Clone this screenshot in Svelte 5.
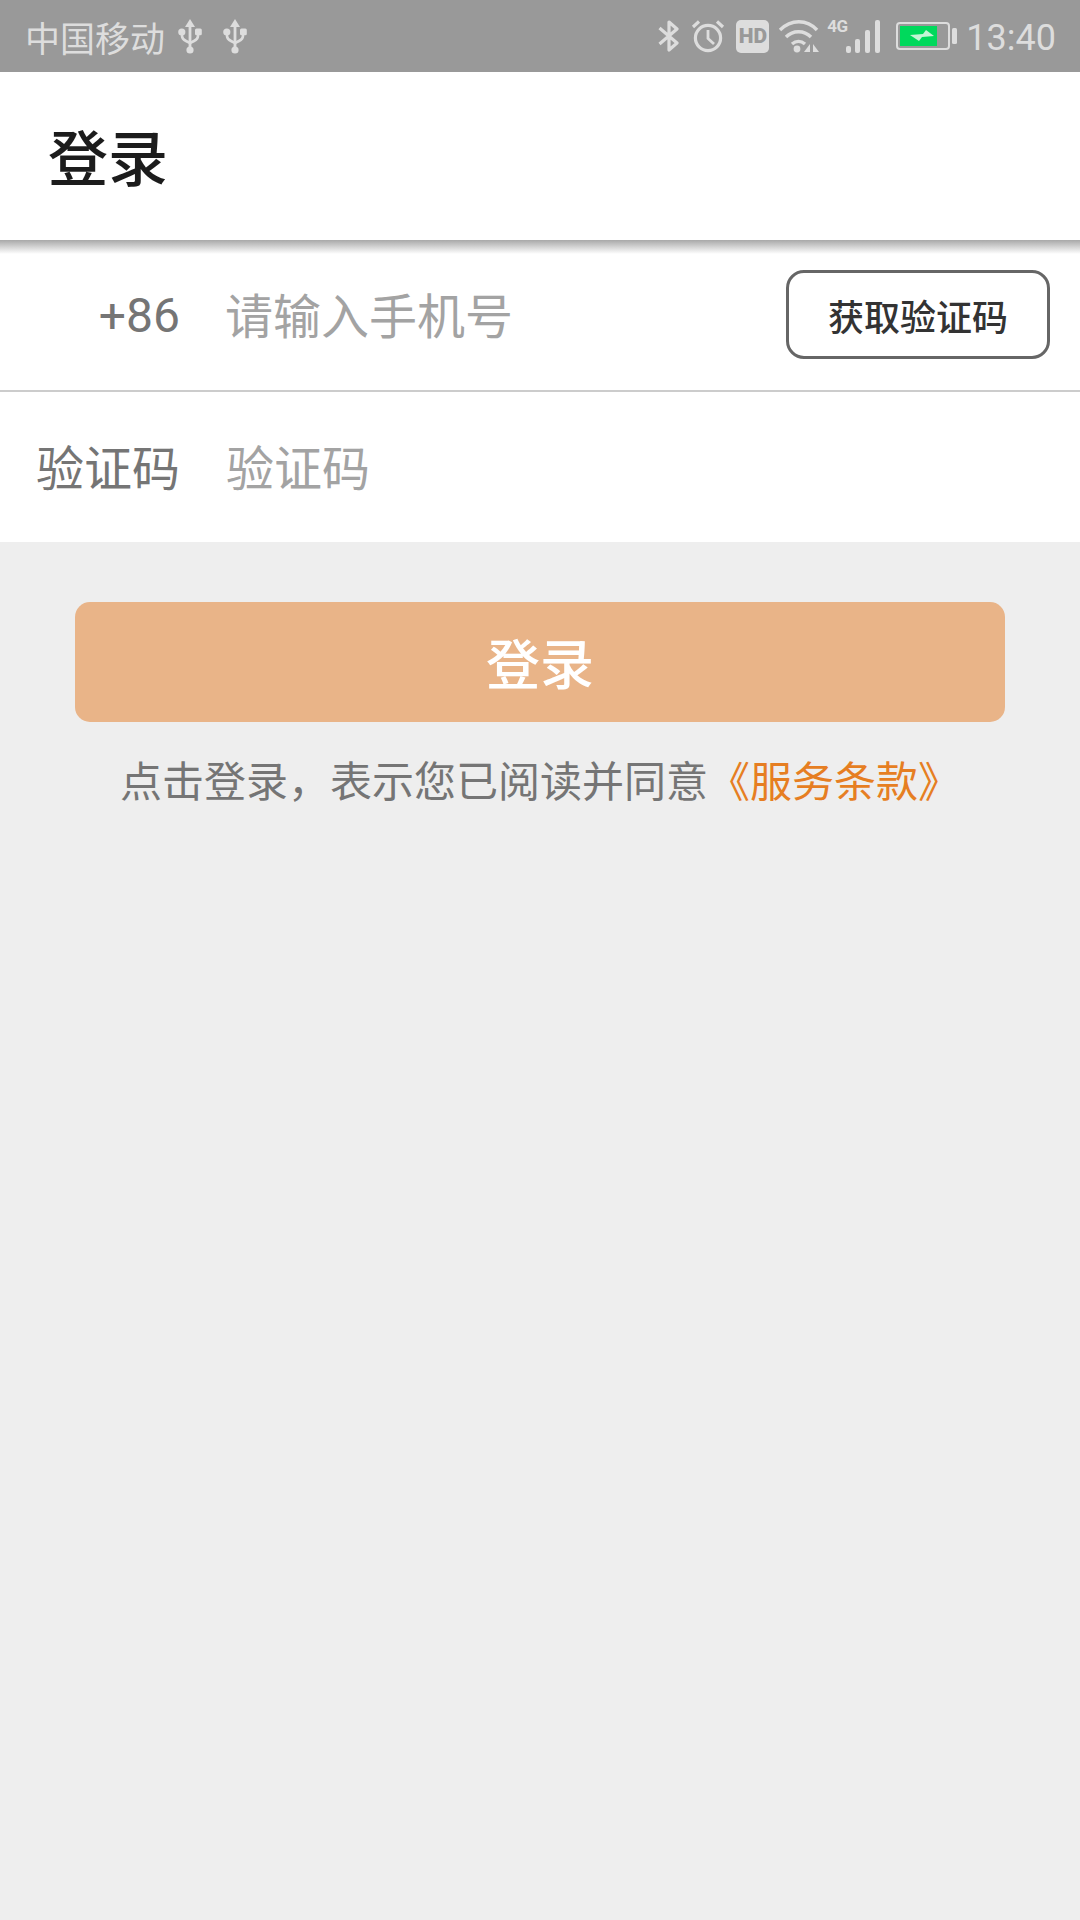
<script>
  const cjk = "登录";
</script>

<div class="page">
  <div class="status">
    <span class="carrier">中国移动</span>
    <svg class="usb first" viewBox="0 0 24 36" width="24" height="36">
      <path d="M12 1l5 8h-3.600v24h-2.800V9H7z" fill="#ddd" />
      <circle cx="12" cy="32" r="3.600" fill="#ddd" />
      <circle cx="3.800" cy="14" r="3.600" fill="#ddd" />
      <rect x="17" y="10.500" width="6.800" height="6.800" rx="1.500" fill="#ddd" />
      <path d="M4 15v3c0 3 2 4 4 5l4 2 4-2c2-1 4-2 4-5v-3" fill="none" stroke="#ddd" stroke-width="2.600" />
    </svg>
    <svg class="usb" viewBox="0 0 24 36" width="24" height="36">
      <path d="M12 1l5 8h-3.600v24h-2.800V9H7z" fill="#ddd" />
      <circle cx="12" cy="32" r="3.600" fill="#ddd" />
      <circle cx="3.800" cy="14" r="3.600" fill="#ddd" />
      <rect x="17" y="10.500" width="6.800" height="6.800" rx="1.500" fill="#ddd" />
      <path d="M4 15v3c0 3 2 4 4 5l4 2 4-2c2-1 4-2 4-5v-3" fill="none" stroke="#ddd" stroke-width="2.600" />
    </svg>

    <div class="status-right">
      <svg viewBox="0 0 22 32" width="22" height="32">
        <path d="M1.500 8L19 23l-8 7V2l8 7L1.500 24" fill="none" stroke="#ddd" stroke-width="3.200" stroke-linejoin="round" />
      </svg>
      <svg class="alarm" viewBox="0 0 34 34" width="34" height="34">
        <circle cx="17" cy="19" r="12.600" fill="none" stroke="#ddd" stroke-width="3.200" />
        <path d="M17 11v8.500l6 5.500" fill="none" stroke="#ddd" stroke-width="2.800" />
        <path d="M2 8l6-5.500M32 8l-6-5.500" stroke="#ddd" stroke-width="3.200" />
      </svg>
      <div class="hd">HD</div>
      <svg class="wifi" viewBox="0 0 42 34" width="42" height="34">
        <path d="M2 11c11-11 27-11 37 0" fill="none" stroke="#ddd" stroke-width="3.400" />
        <path d="M8 18c7-7 18-7 25 0" fill="none" stroke="#ddd" stroke-width="3.400" />
        <path d="M14 25c4-3.500 9-3.500 13 0" fill="none" stroke="#ddd" stroke-width="3.400" />
        <circle cx="19" cy="30" r="3.400" fill="#ddd" />
        <path d="M32 25v8h-6zM35 25v8h6z" fill="#ddd" />
      </svg>
      <div class="signal-wrap">
        <span class="net">4G</span>
        <svg viewBox="0 0 36 34" width="36" height="34">
          <rect x="1" y="27" width="5" height="7" rx="2" fill="#ddd" />
          <rect x="10" y="20" width="5" height="14" rx="2" fill="#ddd" />
          <rect x="20" y="11" width="5" height="23" rx="2" fill="#ddd" />
          <rect x="30" y="1" width="5" height="33" rx="2" fill="#ddd" />
        </svg>
      </div>
      <svg class="battery" viewBox="0 0 62 30" width="62" height="30">
        <rect x="1" y="2" width="52" height="26" rx="3" fill="none" stroke="#ddd" stroke-width="2" />
        <rect x="4" y="5" width="37" height="20" fill="#00d95c" />
        <path d="M14 14l13-1 3-4 8 6-12 1-3 4z" fill="#c4f5d6" />
        <rect x="56" y="7" width="5" height="16" rx="1.500" fill="#ddd" />
      </svg>
      <span class="time">13:40</span>
    </div>
  </div>

  <header class="appbar">
    <h1>{cjk}</h1>
  </header>
  <div class="shadow"></div>

  <div class="form">
    <div class="row phone">
      <span class="label num">+86</span>
      <span class="hint">请输入手机号</span>
      <button class="code-btn">获取验证码</button>
    </div>
    <div class="row code">
      <span class="label">验证码</span>
      <span class="hint">验证码</span>
    </div>
  </div>

  <div class="actions">
    <button class="login">{cjk}</button>
    <p class="terms">点击登录，表示您已阅读并同意<span class="link">《服务条款》</span></p>
  </div>
</div>

<style>
  :global(body) {
    margin: 0;
    background: #eeeeee;
  }
  .page {
    display: flex;
    flex-direction: column;
    height: 1920px;
    background: #eeeeee;
    font-family: "Noto Sans CJK SC", "Noto Sans", sans-serif;
    overflow: hidden;
  }
  .status {
    display: flex;
    align-items: center;
    height: 72px;
    padding: 0 24px 0 25px;
    background: #999999;
    color: #dddddd;
    box-sizing: border-box;
  }
  .carrier {
    font-size: 35px;
    font-weight: 400;
  }
  .usb {
    margin-left: 21px;
  }
  .usb.first {
    margin-left: 13px;
  }
  .status-right {
    display: flex;
    align-items: center;
    margin-left: auto;
    gap: 11px;
  }
  .hd {
    width: 33px;
    height: 33px;
    border-radius: 5px;
    background: #dddddd;
    color: #999999;
    font: 900 21px/33px "Roboto", sans-serif;
    text-align: center;
  }
  .wifi {
    margin-left: -2px;
  }
  .signal-wrap {
    position: relative;
    margin-left: 14px;
  }
  .signal-wrap svg {
    display: block;
  }
  .net {
    position: absolute;
    left: -18px;
    top: -1px;
    font: 700 17px/16px "Roboto", sans-serif;
    letter-spacing: -0.5px;
  }
  .battery {
    margin-left: 4px;
  }
  .time {
    font: 400 36px/1 "Roboto", sans-serif;
    margin-left: -3px;
    padding-top: 3px;
  }
  .appbar {
    display: flex;
    align-items: center;
    height: 168px;
    padding: 0 0 4px 48px;
    box-sizing: border-box;
    background: #ffffff;
  }
  h1 {
    margin: 0;
    font-size: 60px;
    font-weight: 500;
    color: #1c1c1c;
  }
  .shadow {
    height: 14px;
    background: linear-gradient(#a8a8a8, #ffffff);
  }
  .form {
    background: #ffffff;
  }
  .row {
    display: flex;
    align-items: center;
    padding-right: 30px;
    box-sizing: border-box;
  }
  .row.phone {
    height: 138px;
    padding-bottom: 15px;
    border-bottom: 2px solid #cccccc;
  }
  .row.phone .hint {
    margin-left: 45px;
    padding-bottom: 4px;
  }
  .row.code {
    height: 150px;
    padding-bottom: 4px;
  }
  .label {
    width: 180px;
    text-align: right;
    font-size: 48px;
    color: #757575;
  }
  .num {
    padding-top: 2px;
    font-family: "Roboto", sans-serif;
  }
  .hint {
    margin-left: 46px;
    font-size: 48px;
    color: #a3a3a3;
  }
  .code-btn {
    width: 264px;
    height: 89px;
    margin-left: auto;
    padding: 0;
    border: 3px solid #666666;
    border-radius: 18px;
    background: #ffffff;
    color: #333333;
    font: 500 36px "Noto Sans CJK SC", sans-serif;
  }
  .actions {
    display: flex;
    flex-direction: column;
    align-items: center;
    padding-top: 60px;
  }
  .login {
    width: 930px;
    height: 120px;
    padding: 0 0 2px;
    border: none;
    border-radius: 15px;
    background: #e9b488;
    color: #ffffff;
    font: 500 54px "Noto Sans CJK SC", sans-serif;
  }
  .terms {
    margin: 26px 0 0;
    font-size: 42px;
    color: #757575;
    white-space: nowrap;
  }
  .link {
    color: #e67e22;
  }
</style>
